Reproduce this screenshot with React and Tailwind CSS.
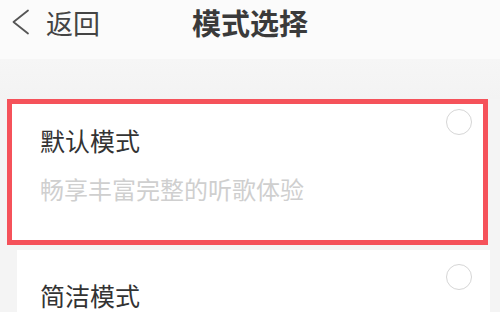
import React from "react";

const font = { fontFamily: '"Noto Sans CJK SC", "Noto Sans", sans-serif' };

const Radio = ({ className = "" }) => (
  <span className={`block w-[26px] h-[26px] rounded-full border-[1.5px] border-[#d6d6d6] bg-white shrink-0 ${className}`} />
);

const App = () => {
  return (
    <div className="w-[500px] h-[312px] overflow-hidden bg-[#f4f4f4]" style={font}>
      {/* top bar */}
      <div className="h-[59px] bg-[#fbfbfb]">
        <div className="grid grid-cols-[1fr_auto_1fr] items-center h-[44px]">
          <div className="flex items-center pl-[12px] text-[#444]">
            <svg width="18" height="26" viewBox="0 0 18 26" fill="none">
              <polyline points="16,1.5 1.5,13 16,24.5" stroke="#555" strokeWidth="1.8" strokeLinejoin="round" strokeLinecap="round" />
            </svg>
            <span className="ml-[16px] text-[27px] leading-none">返回</span>
          </div>
          <h1 className="text-[29px] leading-none font-bold text-[#3a3a3a]">模式选择</h1>
          <div />
        </div>
      </div>

      <div className="h-[40px] bg-gradient-to-b from-[#f6f6f6] to-[#f3f3f3]" />

      {/* selected mode, outlined */}
      <div className="ml-[7px] w-[481px] h-[146px] border-[5px] border-[#f5525a] bg-white flex items-start justify-between pl-[28px] pr-[11px]">
        <div className="pt-[24px]">
          <div className="text-[25px] leading-none text-[#333]">默认模式</div>
          <div className="mt-[24px] text-[24px] leading-none text-[#cfcfcf]">畅享丰富完整的听歌体验</div>
        </div>
        <Radio className="mt-[5px]" />
      </div>

      {/* second mode */}
      <div className="mt-[5px] ml-[17px] w-[473px] h-[80px] bg-white flex items-start justify-between pl-[23px] pr-[18px]">
        <div className="pt-[33px] text-[25px] leading-none text-[#333]">简洁模式</div>
        <Radio className="mt-[14px]" />
      </div>
    </div>
  );
};

export default App;
